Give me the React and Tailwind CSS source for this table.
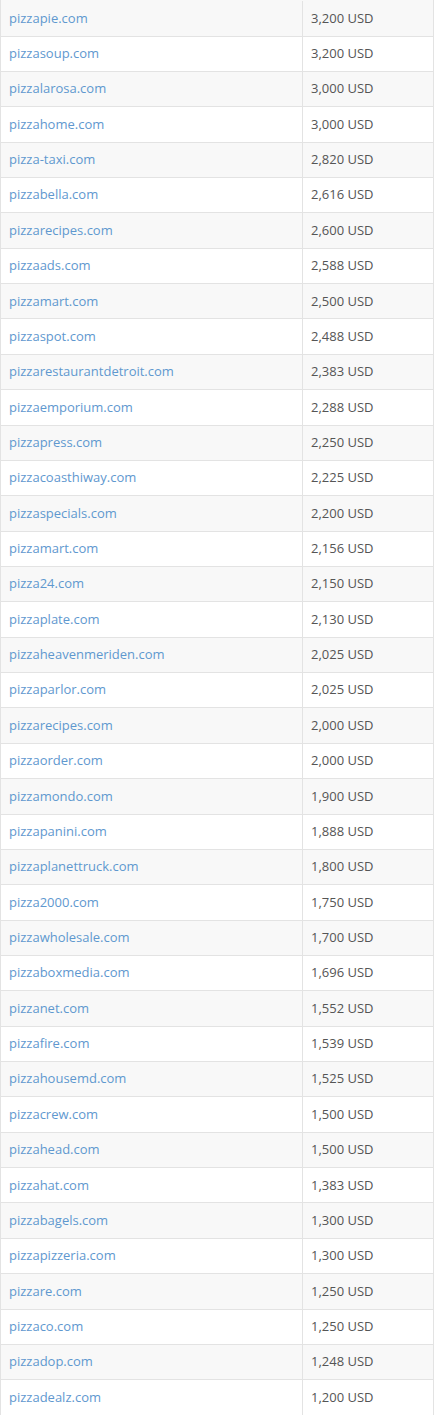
import React from 'react';

const rows = [
    ['pizzapie.com', '3,200'],
    ['pizzasoup.com', '3,200'],
    ['pizzalarosa.com', '3,000'],
    ['pizzahome.com', '3,000'],
    ['pizza-taxi.com', '2,820'],
    ['pizzabella.com', '2,616'],
    ['pizzarecipes.com', '2,600'],
    ['pizzaads.com', '2,588'],
    ['pizzamart.com', '2,500'],
    ['pizzaspot.com', '2,488'],
    ['pizzarestaurantdetroit.com', '2,383'],
    ['pizzaemporium.com', '2,288'],
    ['pizzapress.com', '2,250'],
    ['pizzacoasthiway.com', '2,225'],
    ['pizzaspecials.com', '2,200'],
    ['pizzamart.com', '2,156'],
    ['pizza24.com', '2,150'],
    ['pizzaplate.com', '2,130'],
    ['pizzaheavenmeriden.com', '2,025'],
    ['pizzaparlor.com', '2,025'],
    ['pizzarecipes.com', '2,000'],
    ['pizzaorder.com', '2,000'],
    ['pizzamondo.com', '1,900'],
    ['pizzapanini.com', '1,888'],
    ['pizzaplanettruck.com', '1,800'],
    ['pizza2000.com', '1,750'],
    ['pizzawholesale.com', '1,700'],
    ['pizzaboxmedia.com', '1,696'],
    ['pizzanet.com', '1,552'],
    ['pizzafire.com', '1,539'],
    ['pizzahousemd.com', '1,525'],
    ['pizzacrew.com', '1,500'],
    ['pizzahead.com', '1,500'],
    ['pizzahat.com', '1,383'],
    ['pizzabagels.com', '1,300'],
    ['pizzapizzeria.com', '1,300'],
    ['pizzare.com', '1,250'],
    ['pizzaco.com', '1,250'],
    ['pizzadop.com', '1,248'],
    ['pizzadealz.com', '1,200'],
];

export default function App() {
    return (
        <div className="w-[434px] bg-white font-['Open_Sans',sans-serif] text-[13px]">
            {/* 表格 */}
            <div className="border-x border-[#e3e3e3]">
                {rows.map(([domain, price], i) => (
                    <div
                        key={i}
                        className={`grid grid-cols-[302px_1fr] border-b border-[#e3e3e3] ${i === 0 ? 'h-[36.6px] pt-[1px]' : 'h-[35.37px]'} ${i % 2 === 0 ? 'bg-[#f8f8f8]' : 'bg-white'}`}
                    >
                        <div className="flex items-center pl-[8px] border-r border-[#e3e3e3]">
                            <a className="text-[#5f98cf]">{domain}</a>
                        </div>
                        <div className="flex items-center pl-[8px] text-[#555555]">
                            {price} USD
                        </div>
                    </div>
                ))}
            </div>
        </div>
    );
}
